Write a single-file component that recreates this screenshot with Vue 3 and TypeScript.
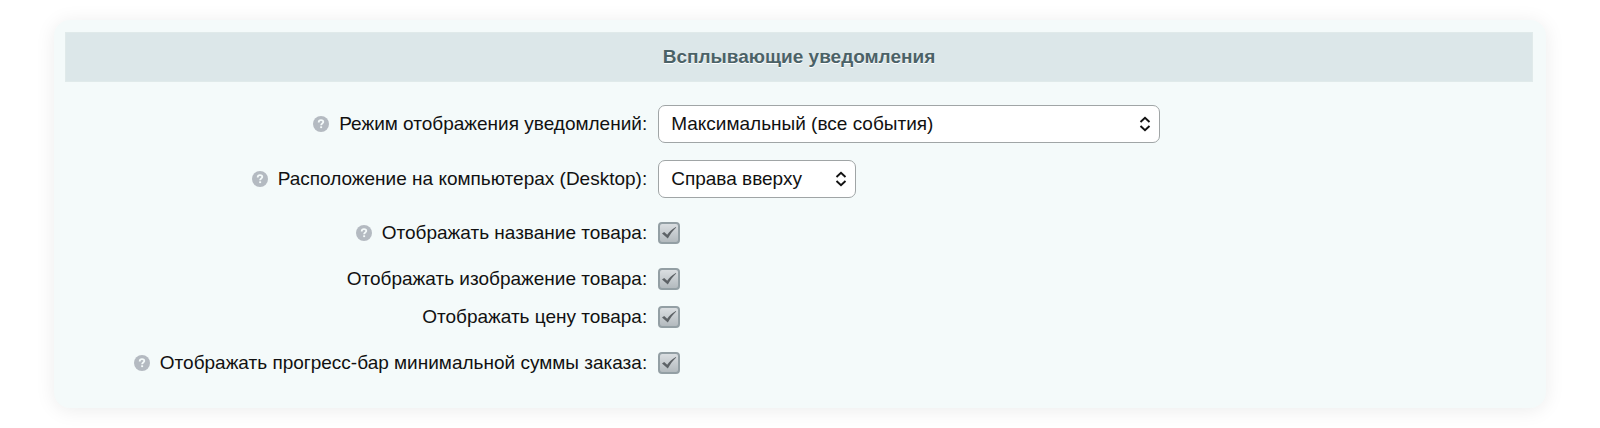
<script setup lang="ts">
import { reactive } from 'vue'

interface Field {
  id: string
  label: string
  help: boolean
  options?: string[]
  size?: 'wide' | 'narrow'
}

const fields: Field[] = [
  { id: 'mode', label: 'Режим отображения уведомлений:', help: true, options: ['Максимальный (все события)'], size: 'wide' },
  { id: 'position', label: 'Расположение на компьютерах (Desktop):', help: true, options: ['Справа вверху'], size: 'narrow' },
  { id: 'name', label: 'Отображать название товара:', help: true },
  { id: 'image', label: 'Отображать изображение товара:', help: false },
  { id: 'price', label: 'Отображать цену товара:', help: false },
  { id: 'progress', label: 'Отображать прогресс-бар минимальной суммы заказа:', help: true },
]

const choices = reactive<Record<string, string>>({
  mode: 'Максимальный (все события)',
  position: 'Справа вверху',
})
const flags = reactive<Record<string, boolean>>({ name: true, image: true, price: true, progress: true })
</script>

<template>
  <form class="panel" @submit.prevent>
    <h2 class="heading">Всплывающие уведомления</h2>
    <div class="rows">
      <div v-for="field in fields" :key="field.id" class="row" :class="{ tall: field.help, select: field.options }">
        <div class="caption">
          <svg v-if="field.help" class="help" viewBox="0 0 16 16" aria-hidden="true">
            <circle cx="8" cy="8" r="8" fill="#b4bac1" />
            <path d="M5.7 6.4C5.7 4.9 6.6 4.2 8 4.2s2.3.7 2.3 1.9c0 1.4-2.2 1.5-2.2 3.1" fill="none" stroke="#f4fafa" stroke-width="1.8" />
            <rect x="7.2" y="10.3" width="1.9" height="1.8" fill="#f4fafa" />
          </svg>
          <label :for="field.id">{{ field.label }}</label>
        </div>
        <div class="control">
          <div v-if="field.options" class="picker" :class="field.size">
            <select :id="field.id" v-model="choices[field.id]">
              <option v-for="option in field.options" :key="option">{{ option }}</option>
            </select>
            <svg class="arrows" viewBox="0 0 12 16" aria-hidden="true">
              <path d="M1.5 6 6 1.8 10.5 6M1.5 10 6 14.2 10.5 10" fill="none" stroke="#111" stroke-width="1.9" />
            </svg>
          </div>
          <div v-else class="tick">
            <input :id="field.id" v-model="flags[field.id]" type="checkbox" />
            <svg v-if="flags[field.id]" class="mark" viewBox="0 0 22 22" aria-hidden="true">
              <path d="M4 11.6 6.2 10 9.2 12.8C11.4 9.5 14 7 17.8 4.9L18.2 5.6C14.7 8.8 12.3 12.2 9.8 16.6Z" fill="#5d6266" />
            </svg>
          </div>
        </div>
      </div>
    </div>
  </form>
</template>

<style>
body {
  background: #fff;
}
</style>

<style scoped>
.panel {
  margin: 20px 54px;
  padding: 12px 13px 18px 11px;
  border-radius: 16px;
  background: #f4fafa;
  box-shadow: 0 2px 20px rgba(0, 0, 0, 0.08);
  color: #111;
  font-family: "Liberation Sans", Arial, sans-serif;
  font-size: 19px;
  line-height: 24px;
}

.heading {
  box-sizing: border-box;
  margin: 0;
  padding: 12px;
  border: 1px solid #e0eaea;
  background: #dce7e9;
  color: #4b6267;
  font-size: 19px;
  line-height: 24px;
  text-align: center;
  text-shadow: 0 1px #fff;
}

.rows {
  padding-top: 14px;
}

.row {
  display: grid;
  grid-template-columns: 40% 60%;
  align-items: center;
  min-height: 38px;
}

.row.tall {
  min-height: 54px;
}

.row.select {
  min-height: 55px;
}

.caption {
  display: flex;
  align-items: center;
  justify-content: flex-end;
  gap: 10px;
  padding-right: 5px;
}

.help {
  width: 16px;
  height: 16px;
}

.control {
  padding-left: 6px;
}

.picker,
.tick {
  display: grid;
  align-items: center;
}

.picker.wide {
  width: 502px;
  max-width: 100%;
}

.picker.narrow {
  width: 198px;
}

select,
.arrows,
input,
.mark {
  grid-area: 1 / 1;
}

select {
  appearance: none;
  box-sizing: border-box;
  width: 100%;
  height: 38px;
  margin: 0;
  padding: 0 32px 0 12px;
  border: 1px solid #a0a5a6;
  border-radius: 7px;
  background: #fff;
  color: #111;
  font: inherit;
}

.arrows {
  justify-self: end;
  width: 12px;
  height: 16px;
  margin-right: 9px;
  pointer-events: none;
}

.tick {
  width: 22px;
}

input {
  appearance: none;
  box-sizing: border-box;
  width: 22px;
  height: 22px;
  margin: 0;
  border: 2px solid #939fa4;
  border-radius: 4px;
  background: linear-gradient(#dadee1, #b3babe);
}

.mark {
  width: 22px;
  height: 22px;
  pointer-events: none;
}
</style>
